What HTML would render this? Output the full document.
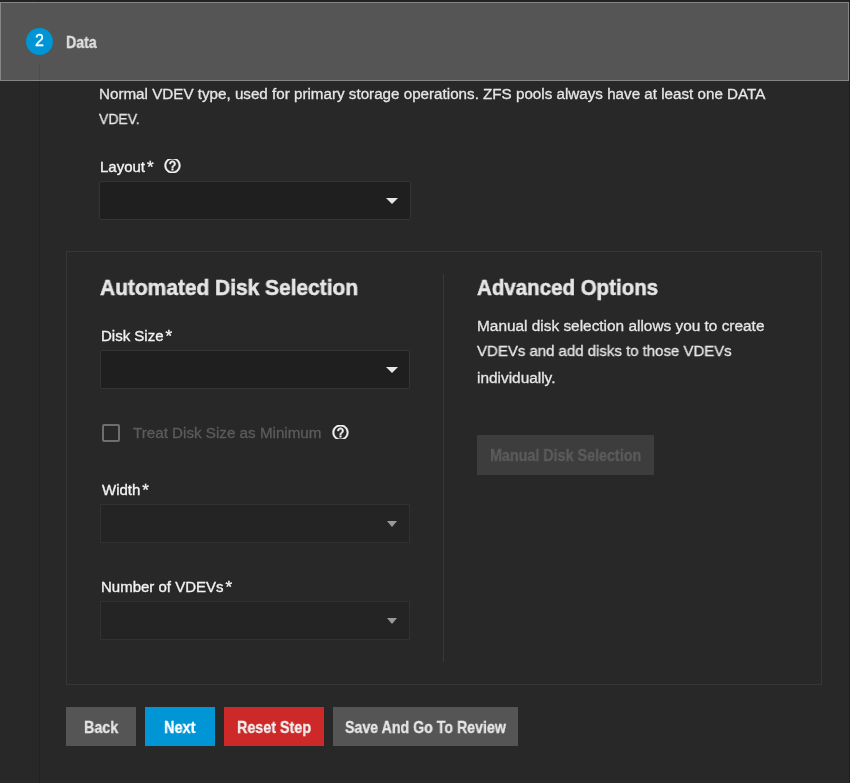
<!DOCTYPE html>
<html>
<head>
<meta charset="utf-8">
<style>
html,body{margin:0;padding:0;}
body{width:850px;height:783px;overflow:hidden;background:#282828;position:relative;font-family:"Liberation Sans",sans-serif;color:#e6e6e6;}
.a{position:absolute;}
.t{position:absolute;white-space:nowrap;line-height:20px;transform-origin:0 0;will-change:transform;}
.m{-webkit-text-stroke:0.35px currentColor;}
.ast{margin-left:2px;font-size:17px;position:relative;top:1px;}
.r{-webkit-text-stroke:0.3px currentColor;}
.vline{left:39px;width:1px;background:rgba(0,0,0,0.15);}
.topstrip{left:0;top:0;width:850px;height:2px;background:#232323;}
.header{left:0;top:2px;width:847px;height:77px;background:#555555;border:1px solid #868686;}
.rightcol{left:849px;top:0;width:1px;height:783px;background:#1e1e1e;}
.circle{left:26px;top:28px;width:27px;height:27px;border-radius:50%;background:#0095d5;}
.sel{position:absolute;box-sizing:border-box;background:#1f1f1f;border:1px solid #353535;border-radius:2px;}
.sel.dis{background:#242424;border-color:#313131;border-radius:0;}
.arrow{position:absolute;width:0;height:0;border-left:6px solid transparent;border-right:6px solid transparent;border-top:6px solid #e6e6e6;}
.dis .arrow{border-left-width:5.5px;border-right-width:5.5px;border-top-width:6px;border-top-color:#9a9a9a;}
.card{left:66px;top:251px;width:754px;height:432px;border:1px solid #363636;}
.divider{left:443px;top:274px;width:1px;height:388px;background:#383838;}
.btn{position:absolute;top:707px;height:39px;}
.bt{-webkit-text-stroke:0.3px currentColor;}
.help{position:absolute;box-sizing:border-box;width:16px;height:16px;border:2px solid #f2f2f2;border-radius:50%;}
</style>
</head>
<body>
<div class="a topstrip"></div>
<div class="a header"></div>
<div class="a rightcol"></div>
<div class="a vline" style="top:0;height:2px;"></div>
<div class="a vline" style="top:63px;height:17px;background:#4b4b4b;"></div>
<div class="a vline" style="top:81px;height:702px;background:#212121;"></div>
<div class="a circle"></div>
<div class="t m" style="left:34.5px;top:31px;font-size:16px;color:#fff;">2</div>
<div class="t bt" style="left:65.8px;top:33px;font-size:16px;font-weight:bold;color:#e0e0e0;transform:scaleX(0.886);">Data</div>

<div class="t r" style="left:98.6px;top:83.5px;font-size:15.2px;">Normal VDEV type, used for primary storage operations. ZFS pools always have at least one DATA</div>
<div class="t r" style="left:98.6px;top:108.8px;font-size:15.2px;transform:scaleX(0.92);">VDEV.</div>

<div class="t m" style="left:100px;top:156.5px;font-size:15px;color:#f2f2f2;">Layout<span class="ast">*</span></div>
<div class="a" style="left:163.12px;top:158.60px;width:18.97px;height:14.50px;overflow:hidden;"><svg style="position:absolute;left:0;top:-2.23px;" width="18.97" height="18.97" viewBox="0 0 24 24"><path fill="#f2f2f2" stroke="#f2f2f2" stroke-width="0.6" d="M11 18h2v-2h-2v2zm1-16C6.48 2 2 6.48 2 12s4.48 10 10 10 10-4.48 10-10S17.52 2 12 2zm0 18c-4.41 0-8-3.59-8-8s3.59-8 8-8 8 3.59 8 8-3.59 8-8 8zm0-14c-2.21 0-4 1.79-4 4h2c0-1.1.9-2 2-2s2 .9 2 2c0 2-3 1.75-3 5h2c0-2.25 3-2.5 3-5 0-2.21-1.79-4-4-4z"/></svg></div>
<div class="sel" style="left:99px;top:181px;width:312px;height:39px;"><div class="arrow" style="left:286px;top:16px;"></div></div>

<div class="a card"></div>
<div class="a divider"></div>

<div class="t" style="left:100px;top:277.5px;font-size:22px;font-weight:bold;transform:scaleX(0.951);-webkit-text-stroke:0.5px currentColor;">Automated Disk Selection</div>
<div class="t" style="left:477px;top:277.5px;font-size:22px;font-weight:bold;transform:scaleX(0.932);-webkit-text-stroke:0.5px currentColor;">Advanced Options</div>

<div class="t m" style="left:101px;top:326px;font-size:15px;color:#f2f2f2;">Disk Size<span class="ast">*</span></div>
<div class="sel" style="left:100px;top:350px;width:310px;height:39px;"><div class="arrow" style="left:285px;top:16px;"></div></div>

<div class="a" style="left:102px;top:424px;width:18px;height:18px;box-sizing:border-box;border:2px solid #6e6e6e;border-radius:2px;"></div>
<div class="t r" style="left:133px;top:422.5px;font-size:15.2px;color:#5c5c5c;">Treat Disk Size as Minimum</div>
<div class="a" style="left:330.71px;top:425.00px;width:18.97px;height:14.40px;overflow:hidden;"><svg style="position:absolute;left:0;top:-2.29px;" width="18.97" height="18.97" viewBox="0 0 24 24"><path fill="#f2f2f2" stroke="#f2f2f2" stroke-width="0.6" d="M11 18h2v-2h-2v2zm1-16C6.48 2 2 6.48 2 12s4.48 10 10 10 10-4.48 10-10S17.52 2 12 2zm0 18c-4.41 0-8-3.59-8-8s3.59-8 8-8 8 3.59 8 8-3.59 8-8 8zm0-14c-2.21 0-4 1.79-4 4h2c0-1.1.9-2 2-2s2 .9 2 2c0 2-3 1.75-3 5h2c0-2.25 3-2.5 3-5 0-2.21-1.79-4-4-4z"/></svg></div>

<div class="t m" style="left:101.5px;top:479.5px;font-size:15px;color:#f2f2f2;">Width<span class="ast">*</span></div>
<div class="sel dis" style="left:100px;top:504px;width:310px;height:39px;"><div class="arrow" style="left:286px;top:16px;"></div></div>

<div class="t m" style="left:101px;top:576.5px;font-size:15px;color:#f2f2f2;">Number of VDEVs<span class="ast">*</span></div>
<div class="sel dis" style="left:100px;top:601px;width:310px;height:39px;"><div class="arrow" style="left:286px;top:16px;"></div></div>

<div class="t r" style="left:477px;top:316.1px;font-size:15.4px;">Manual disk selection allows you to create</div>
<div class="t r" style="left:477px;top:341.3px;font-size:15.4px;transform:scaleX(0.973);">VDEVs and add disks to those VDEVs</div>
<div class="t r" style="left:477px;top:368.3px;font-size:15.4px;">individually.</div>

<div class="a" style="left:477px;top:435px;width:177px;height:40px;background:#3d3d3d;"></div>
<div class="t bt" style="left:489.6px;top:445.6px;font-size:16px;font-weight:bold;color:#5c5c5c;transform:scaleX(0.895);">Manual Disk Selection</div>

<div class="btn" style="left:66px;width:70px;background:#555555;"></div>
<div class="t bt" style="left:84px;top:717px;font-size:16.5px;font-weight:bold;color:#e6e6e6;transform:scaleX(0.868);">Back</div>
<div class="btn" style="left:145px;width:70px;background:#0095d5;"></div>
<div class="t bt" style="left:164px;top:717px;font-size:16.5px;font-weight:bold;color:#fff;transform:scaleX(0.88);">Next</div>
<div class="btn" style="left:224px;width:100px;background:#ce2929;"></div>
<div class="t bt" style="left:237px;top:717px;font-size:16.5px;font-weight:bold;color:#f0f0f0;transform:scaleX(0.868);">Reset Step</div>
<div class="btn" style="left:333px;width:185px;background:#555555;"></div>
<div class="t bt" style="left:345px;top:717px;font-size:16.5px;font-weight:bold;color:#e6e6e6;transform:scaleX(0.86);">Save And Go To Review</div>
</body>
</html>
